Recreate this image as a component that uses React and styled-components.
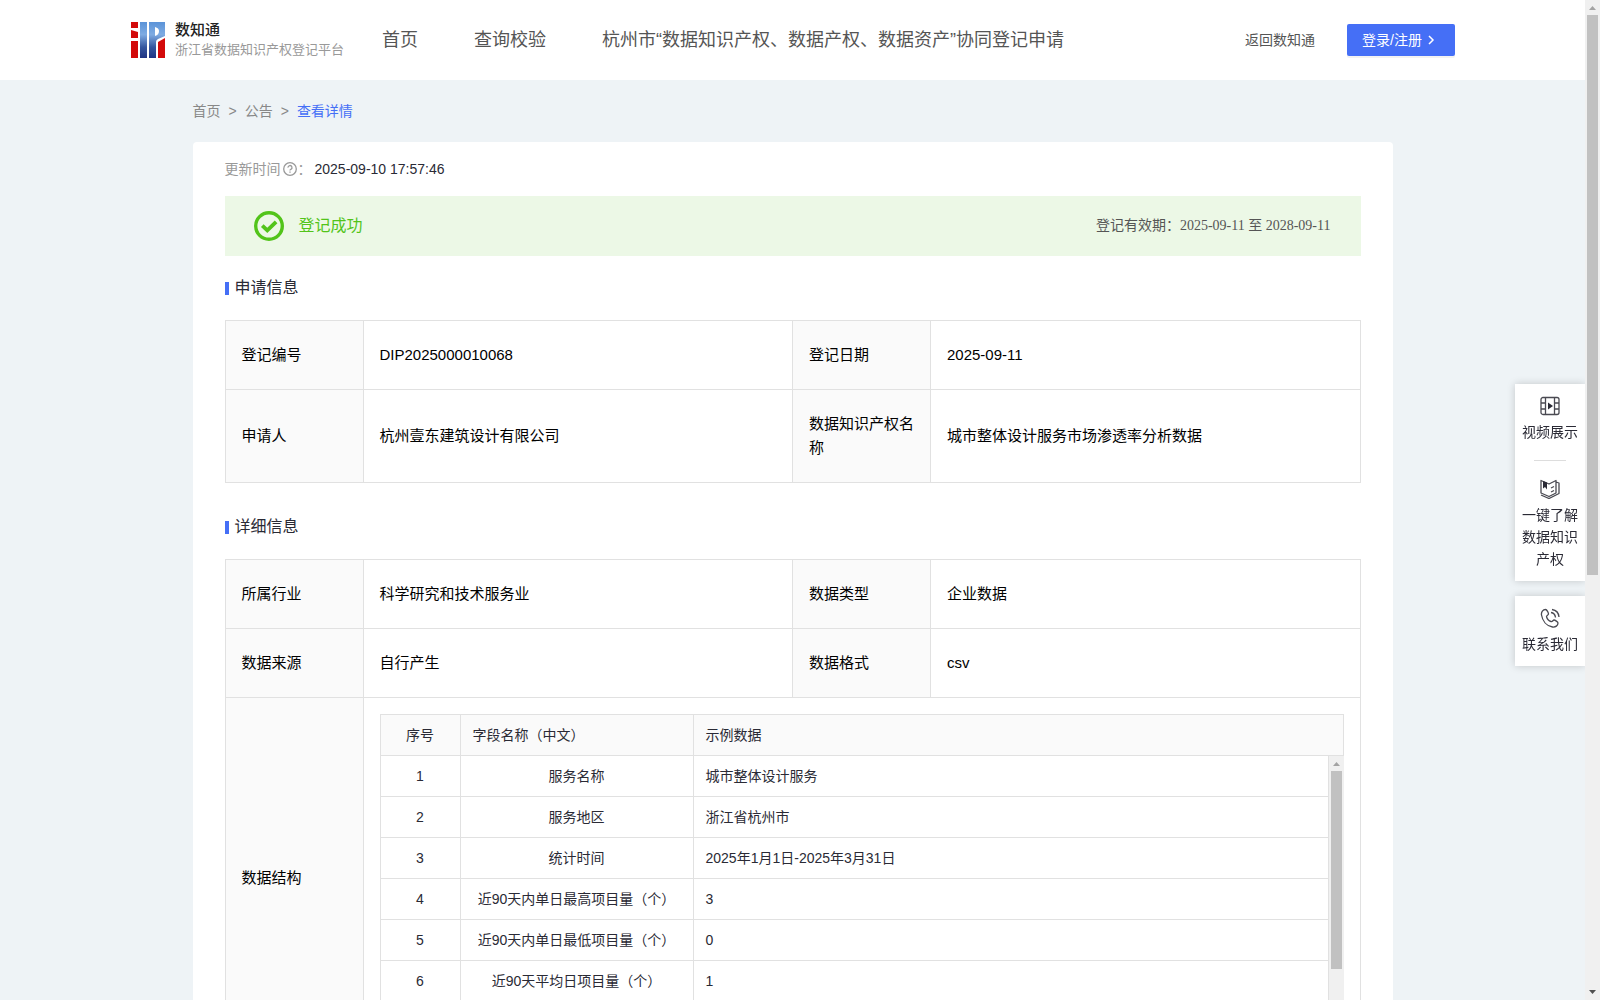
import React from "react";
import styled, { createGlobalStyle, css } from "styled-components";

const sans = '"Liberation Sans", "Noto Sans CJK SC", sans-serif';
const serif = '"Liberation Serif", "Noto Sans CJK SC", serif';
const line = "#e1e1e1";
const blue = "#456ff6";

const GlobalStyle = createGlobalStyle`
  *, *::before, *::after { box-sizing: border-box; }
  body { margin: 0; overflow: hidden; background: #eef3f6; font-family: ${sans}; font-size: 14px; line-height: 20px; color: #2a2a35; }
  a { color: inherit; text-decoration: none; }
  button { font: inherit; cursor: pointer; }
`;

const Shell = styled.div`
  display: flex;
  height: 100vh;
`;

const Viewport = styled.div`
  flex: 1;
  min-width: 0;
  overflow-y: auto;
  scrollbar-width: none;
`;

/* scrollbars */
const Track = styled.div`
  flex: none;
  display: flex;
  flex-direction: column;
  width: 15px;
  background: #f0f0f0;
`;
const Arrow = styled.svg`
  flex: none;
  width: 15px;
  height: 15px;
  fill: ${(p) => (p.$active ? "#505050" : "#a3a3a3")};
`;
const Rail = styled.div`
  flex: 1;
  padding: 0 2px;
`;
const Thumb = styled.div`
  height: ${(p) => (100 * p.$visible) / p.$total}%;
  background: #c1c1c1;
`;

function Scrollbar({ visible, total }) {
  return (
    <Track aria-hidden="true">
      <Arrow viewBox="0 0 15 15"><path d="M4 10 7.5 6 11 10Z" /></Arrow>
      <Rail><Thumb $visible={visible} $total={total} /></Rail>
      <Arrow viewBox="0 0 15 15" $active><path d="M4 5 7.5 9 11 5Z" /></Arrow>
    </Track>
  );
}

/* header */
const Header = styled.header`
  display: flex;
  align-items: center;
  height: 80px;
  padding: 0 130px;
  background: #fff;
`;
const Brand = styled.a`
  display: flex;
  align-items: center;
  gap: 9px;
  width: 252px;
`;
const BrandMark = styled.svg`
  width: 36px;
  height: 36px;
`;
const BrandText = styled.span`
  display: flex;
  flex-direction: column;
  line-height: 20px;
`;
const BrandName = styled.span`
  font-size: 15px;
  font-weight: 500;
  color: #222;
`;
const BrandSub = styled.span`
  font-size: 13px;
  color: #999;
  white-space: nowrap;
`;
const Nav = styled.nav`
  display: flex;
  flex: 1;
  gap: 56px;
  font-size: 18px;
  line-height: 24px;
  color: #555;
  white-space: nowrap;
`;
const Actions = styled.div`
  display: flex;
  align-items: center;
  gap: 32px;
  color: #555;
  white-space: nowrap;
`;
const LoginButton = styled.button`
  display: flex;
  align-items: center;
  gap: 4px;
  width: 108px;
  height: 32px;
  padding: 0 15px;
  border: 0;
  border-radius: 2px;
  background: ${blue};
  color: #fff;
  box-shadow: 0 2px 0 rgba(0, 0, 0, 0.05);
`;
const Chevron = styled.svg`
  width: 10px;
  height: 10px;
  fill: none;
  stroke: currentColor;
  stroke-width: 1.5;
`;

/* page */
const Page = styled.main`
  max-width: 1200px;
  margin: 0 auto;
  padding-bottom: 60px;
`;
const Crumbs = styled.nav`
  display: flex;
  align-items: center;
  gap: 8px;
  height: 62px;
  color: #888;
`;
const CrumbLink = styled.a`
  color: ${(p) => (p.$current ? blue : "#888")};
`;
const Card = styled.section`
  padding: 16px 32px 40px;
  border-radius: 4px;
  background: #fff;
`;
const Updated = styled.div`
  display: flex;
  align-items: center;
  height: 22px;
  margin-bottom: 16px;
  color: #999;
`;
const HelpIcon = styled.svg`
  width: 14px;
  height: 14px;
  margin: 0 1px 0 2px;
  fill: none;
  stroke: currentColor;
  stroke-width: 1.3;
`;
const UpdatedTime = styled.time`
  margin-left: 3px;
  color: #2a2a35;
`;
const Banner = styled.div`
  display: flex;
  align-items: center;
  height: 60px;
  padding: 0 30px 0 29px;
  background: #ecf8e6;
`;
const StatusIcon = styled.svg`
  width: 30px;
  height: 30px;
  fill: none;
  stroke: #52c41a;
`;
const Status = styled.strong`
  flex: 1;
  margin-left: 15px;
  font-size: 16px;
  font-weight: 400;
  color: #52c41a;
`;
const Validity = styled.span`
  font-family: ${serif};
  color: #555;
`;
const SectionTitle = styled.h2`
  display: flex;
  align-items: center;
  gap: 6px;
  margin: ${(p) => (p.$spaced ? 32 : 20)}px 0 20px;
  font-size: 16px;
  font-weight: 400;
  line-height: 24px;
  &::before {
    content: "";
    width: 4px;
    height: 13px;
    background: ${blue};
  }
`;

/* information table */
const InfoTable = styled.table`
  width: 100%;
  border-collapse: collapse;
  table-layout: fixed;
  font-size: 15px;
  line-height: 24px;
  color: #000;
`;
const LabelCol = styled.col`
  width: 138px;
`;
const InfoLabel = styled.th`
  padding: 22px 16px;
  border: 1px solid ${line};
  background: #fafafa;
  font-weight: 400;
  text-align: left;
`;
const InfoValue = styled.td`
  padding: ${(p) => (p.$nested ? "16px" : "22px 16px")};
  border: 1px solid ${line};
`;

/* field table */
const FieldScroll = styled.div`
  display: flex;
  height: 286px;
  overflow: hidden;
`;
const FieldViewport = styled.div`
  flex: 1;
  min-width: 0;
  overflow-y: auto;
  scrollbar-width: none;
`;
const FieldTable = styled.table`
  width: 100%;
  border-collapse: separate;
  border-spacing: 0;
  border-left: 1px solid ${line};
  border-top: ${(p) => (p.$head ? `1px solid ${line}` : 0)};
  table-layout: fixed;
  font-size: 14px;
  line-height: 22px;
  color: #2a2a35;
`;
const cell = css`
  padding: 9px 12px;
  border-right: 1px solid ${line};
  border-bottom: 1px solid ${line};
  font-weight: 400;
  text-align: ${(p) => (p.$center ? "center" : "left")};
`;
const FieldHead = styled.th`
  ${cell}
  background: #fafafa;
`;
const FieldCell = styled.td`
  ${cell}
`;
const IndexCol = styled.col`
  width: 80px;
`;
const NameCol = styled.col`
  width: 233px;
`;

/* floating side tools */
const SideTools = styled.aside`
  position: fixed;
  top: 384px;
  right: 15px;
  display: flex;
  flex-direction: column;
  gap: 15px;
  width: 70px;
`;
const ToolGroup = styled.div`
  display: flex;
  flex-direction: column;
  align-items: center;
  padding: 12px 7px 11px;
  background: #fff;
  box-shadow: 0 0 8px rgba(0, 0, 0, 0.18);
  clip-path: inset(-12px 0 -12px -12px);
`;
const Tool = styled.a`
  display: flex;
  flex-direction: column;
  align-items: center;
  gap: 5px;
  line-height: 22px;
  text-align: center;
`;
const ToolDivider = styled.hr`
  width: 32px;
  height: 1px;
  margin: 17px 0 18px;
  border: 0;
  background: #ddd;
`;
const ToolIcon = styled.svg`
  width: 20px;
  height: 20px;
  fill: none;
  stroke: #4a4a52;
  stroke-width: 1.3;
  stroke-linejoin: round;
`;

const fields = [
  ["服务名称", "城市整体设计服务"],
  ["服务地区", "浙江省杭州市"],
  ["统计时间", "2025年1月1日-2025年3月31日"],
  ["近90天内单日最高项目量（个）", "3"],
  ["近90天内单日最低项目量（个）", "0"],
  ["近90天平均日项目量（个）", "1"],
];

function InfoCols() {
  return (
    <colgroup>
      <LabelCol />
      <col />
      <LabelCol />
      <col />
    </colgroup>
  );
}

function InfoRow({ items }) {
  return (
    <tr>
      {items.map(([label, value]) => (
        <React.Fragment key={label}>
          <InfoLabel scope="row">{label}</InfoLabel>
          <InfoValue>{value}</InfoValue>
        </React.Fragment>
      ))}
    </tr>
  );
}

function FieldCols() {
  return (
    <colgroup>
      <IndexCol />
      <NameCol />
      <col />
    </colgroup>
  );
}

function Logo() {
  return (
    <BrandMark viewBox="0 0 36 36" aria-hidden="true">
      <defs>
        <linearGradient id="mark" x1="0" y1="0" x2="0" y2="36" gradientUnits="userSpaceOnUse">
          <stop offset="0" stopColor="#5b93d8" />
          <stop offset="0.35" stopColor="#7eabe2" />
          <stop offset="0.7" stopColor="#34569f" />
          <stop offset="1" stopColor="#1f3484" />
        </linearGradient>
      </defs>
      <path fill="#d30a0a" d="M1 0h7v6H1zM1 8l7 2v6H1zM1 19h7v17H1zM28 20l7-4v20h-7z" />
      <path
        fill="url(#mark)"
        fillRule="evenodd"
        d="M10 0h7v36h-7zM19 0h16v14l-7 3q-2 1-2 3v16h-7zM25 5v9q4-1 4-5 0-3-4-4z"
      />
    </BrandMark>
  );
}

export default function App() {
  return (
    <Shell>
      <GlobalStyle />
      <Viewport>
        <Header>
          <Brand href="#">
            <Logo />
            <BrandText>
              <BrandName>数知通</BrandName>
              <BrandSub>浙江省数据知识产权登记平台</BrandSub>
            </BrandText>
          </Brand>
          <Nav>
            <a href="#">首页</a>
            <a href="#">查询校验</a>
            <a href="#">杭州市“数据知识产权、数据产权、数据资产”协同登记申请</a>
          </Nav>
          <Actions>
            <a href="#">返回数知通</a>
            <LoginButton type="button">
              登录/注册
              <Chevron viewBox="0 0 10 10"><path d="M3 1 7 5 3 9" /></Chevron>
            </LoginButton>
          </Actions>
        </Header>

        <Page>
          <Crumbs>
            <CrumbLink href="#">首页</CrumbLink>
            <span>&gt;</span>
            <CrumbLink href="#">公告</CrumbLink>
            <span>&gt;</span>
            <CrumbLink href="#" $current>查看详情</CrumbLink>
          </Crumbs>

          <Card>
            <Updated>
              更新时间
              <HelpIcon viewBox="0 0 14 14">
                <circle cx="7" cy="7" r="6.3" />
                <path d="M5 5.6a2 2 0 1 1 2.9 1.7q-.9.5-.9 1.3M7 9.6v1.1" />
              </HelpIcon>
              ：
              <UpdatedTime>2025-09-10 17:57:46</UpdatedTime>
            </Updated>

            <Banner>
              <StatusIcon viewBox="0 0 30 30">
                <circle cx="15" cy="15" r="13.3" strokeWidth="3.4" />
                <path d="m8.3 14.6 5 4.8 8.8-8.6" strokeWidth="3.8" />
              </StatusIcon>
              <Status>登记成功</Status>
              <Validity>登记有效期：2025-09-11 至 2028-09-11</Validity>
            </Banner>

            <SectionTitle>申请信息</SectionTitle>
            <InfoTable>
              <InfoCols />
              <tbody>
                <InfoRow items={[["登记编号", "DIP2025000010068"], ["登记日期", "2025-09-11"]]} />
                <InfoRow items={[["申请人", "杭州壹东建筑设计有限公司"], ["数据知识产权名称", "城市整体设计服务市场渗透率分析数据"]]} />
              </tbody>
            </InfoTable>

            <SectionTitle $spaced>详细信息</SectionTitle>
            <InfoTable>
              <InfoCols />
              <tbody>
                <InfoRow items={[["所属行业", "科学研究和技术服务业"], ["数据类型", "企业数据"]]} />
                <InfoRow items={[["数据来源", "自行产生"], ["数据格式", "csv"]]} />
                <tr>
                  <InfoLabel scope="row">数据结构</InfoLabel>
                  <InfoValue colSpan={3} $nested>
                    <FieldTable $head>
                      <FieldCols />
                      <thead>
                        <tr>
                          <FieldHead $center>序号</FieldHead>
                          <FieldHead>字段名称（中文）</FieldHead>
                          <FieldHead>示例数据</FieldHead>
                        </tr>
                      </thead>
                    </FieldTable>
                    <FieldScroll>
                      <FieldViewport>
                        <FieldTable>
                          <FieldCols />
                          <tbody>
                            {fields.map(([name, sample], i) => (
                              <tr key={name}>
                                <FieldCell $center>{i + 1}</FieldCell>
                                <FieldCell $center>{name}</FieldCell>
                                <FieldCell>{sample}</FieldCell>
                              </tr>
                            ))}
                          </tbody>
                        </FieldTable>
                      </FieldViewport>
                      <Scrollbar visible={286} total={369} />
                    </FieldScroll>
                  </InfoValue>
                </tr>
              </tbody>
            </InfoTable>
          </Card>
        </Page>
      </Viewport>
      <Scrollbar visible={1000} total={1732} />

      <SideTools>
        <ToolGroup>
          <Tool href="#">
            <ToolIcon viewBox="0 0 20 20">
              <rect x="1" y="1.5" width="18" height="17" rx="2" />
              <path d="M5.500 1.500v17M14.500 1.500v17M1 7h4.500M1 13h4.500M14.500 7h4.500M14.500 13h4.500" />
              <path d="M8 6.500v7l5-3.500z" fill="#2a2a35" stroke="none" />
            </ToolIcon>
            视频展示
          </Tool>
          <ToolDivider />
          <Tool href="#">
            <ToolIcon viewBox="0 0 20 20">
              <path d="M1 1.500 9 5 16 1.500V14L9 17.500 1 14ZM1 16l8 3.500 10-5V4l-3-1M11 9l3-1.500M11 13l3-1.500" />
              <path d="M3 2v7.500l2-1.500 2 2.500V3.500z" fill="#2a2a35" stroke="none" />
            </ToolIcon>
            一键了解数据知识产权
          </Tool>
        </ToolGroup>
        <ToolGroup>
          <Tool href="#">
            <ToolIcon viewBox="0 0 20 20">
              <path d="M5.500 1.500C3 1.500 1 4 1.500 7c1 6 5 11 11 12 3 .5 5.500-1.500 5.500-4 0-1-3-3-4-3s-1.500 2-3 1.500C9 13 7 10.500 6.500 8.500 6.500 7.500 8.500 7 8.500 6s-1.500-4.500-3-4.500Z" />
              <path d="M11 4.500q4 .5 4.500 5M12 1.500q6.500 1 7 7.500" />
            </ToolIcon>
            联系我们
          </Tool>
        </ToolGroup>
      </SideTools>
    </Shell>
  );
}
